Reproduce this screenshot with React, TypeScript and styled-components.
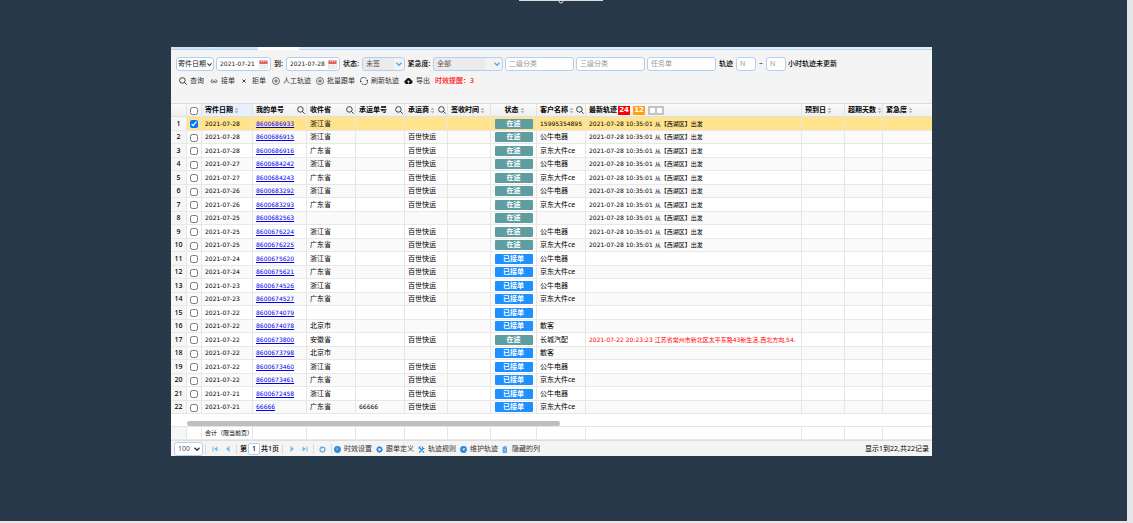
import React from "react";
import styled, { createGlobalStyle, css } from "styled-components";

const GlobalStyle = createGlobalStyle`
  * { box-sizing: border-box; }
  body {
    margin: 0;
    background: #e6e6e6;
    color: #000;
    font: 7px/12px "Noto Sans", "Noto Sans CJK SC", sans-serif;
  }
  button, input, select { font: inherit; color: inherit; }
  svg { display: block; flex: none; }
`;

const compactText = css`
  font-family: "DejaVu Sans", "Noto Sans CJK SC", sans-serif;
  font-size: 6px;
`;

const Page = styled.div`
  min-height: 100vh;
  padding: 0 6px 2px 0;
  background: #e6e6e6;
`;

const Backdrop = styled.main`
  display: flex;
  flex-direction: column;
  min-height: calc(100vh - 2px);
  background: #283a4a;
`;

const Handle = styled.div`
  display: flex;
  justify-content: center;
  align-self: center;
  width: 84px;
  height: 3px;
  margin-right: 5px;
  border-top: 1px solid #dcdfda;
`;

const Panel = styled.section`
  margin: 44px 195px 65px 171px;
  background: #fff;
`;

const TabStrip = styled.div`
  display: flex;
  gap: 1px;
  height: 3px;
  background: #e3eefb;
  border-bottom: 1px solid #b9d5f5;
`;

const TabEdge = styled.span<{ $active?: boolean; $width: number }>`
  width: ${(p) => p.$width}px;
  height: ${(p) => (p.$active ? 3 : 2)}px;
  background: ${(p) => (p.$active ? "#fff" : "#d5e5f8")};
`;

const Toolbar = styled.div`
  display: flex;
  flex-direction: column;
  gap: 4px;
  height: 53px;
  padding: 7px 5px 0;
  background: #f4f4f4;
`;

const Filters = styled.form`
  display: flex;
  align-items: center;
  gap: 2px;
  height: 14px;
  color: #222;
`;

const FilterLabel = styled.label<{ $width: number }>`
  width: ${(p) => p.$width}px;
  text-align: center;
  white-space: nowrap;
  font-weight: 500;
  color: #000;
`;

const Field = styled.span<{ $width: number; $muted?: boolean; $tight?: boolean }>`
  display: flex;
  align-items: center;
  flex: none;
  width: ${(p) => p.$width}px;
  height: 14px;
  padding: ${(p) => (p.$tight ? "0 1px" : "0 2px 0 3px")};
  border: 1px solid #b5cff0;
  border-radius: 3px;
  background: ${(p) => (p.$muted ? "linear-gradient(90deg, #ebebeb 75%, #f3f3f3 75%)" : "#fff")};
`;

const bareControl = css`
  flex: 1;
  min-width: 0;
  width: 100%;
  height: 12px;
  padding: 0;
  border: 0;
  outline: 0;
  background: transparent;
  appearance: none;
  &::placeholder { color: #999; opacity: 1; }
`;

const TextInput = styled.input`${bareControl}`;
const DateInput = styled.input`
  ${bareControl}
  ${compactText}
`;
const Select = styled.select<{ $dim?: boolean }>`
  ${bareControl}
  ${(p) => p.$dim && "color: #555;"}
`;

const Actions = styled.div`
  display: flex;
  align-items: center;
  height: 12px;
  padding-left: 3px;
`;

const ActionButton = styled.button<{ $wide?: boolean }>`
  display: flex;
  align-items: center;
  gap: 3px;
  width: ${(p) => (p.$wide ? 44 : 31)}px;
  height: 12px;
  padding: 0;
  border: 0;
  background: none;
  color: #333;
  white-space: nowrap;
`;

const Alert = styled.strong`
  color: #ff1010;
  font-weight: 500;
  white-space: nowrap;
`;

const Grid = styled.table`
  width: 100%;
  table-layout: fixed;
  border-spacing: 0;
  white-space: nowrap;
`;

const HeadCell = styled.th<{ $sorted?: boolean }>`
  height: 14px;
  padding: 0 1px 0 3px;
  border-right: 1px solid #e2e2e2;
  border-top: 1px solid #dcdcdc;
  border-bottom: 1px solid #e0e0e0;
  background: ${(p) => (p.$sorted ? "#e8f0fd" : "linear-gradient(#fafafa, #efefef)")};
  font-weight: 700;
  text-align: left;
  overflow: hidden;
  &:last-child { border-right: 0; }
`;

const HeadContent = styled.div<{ $center?: boolean }>`
  display: flex;
  align-items: center;
  justify-content: ${(p) => (p.$center ? "center" : "flex-start")};
  gap: 1px;
  height: 12px;
`;

const SearchSlot = styled.span`
  margin-left: auto;
`;

const CountBadge = styled.span<{ $color: string }>`
  width: 12px;
  height: 9px;
  margin-right: 2px;
  background: ${(p) => p.$color};
  color: #fff;
  font: bold 7px/9px "DejaVu Sans", sans-serif;
  text-align: center;
`;

const EmptyBadge = styled.span`
  display: flex;
  gap: 2px;
  width: 16px;
  height: 9px;
  padding: 2px;
  background: #c4c4c4;
  &::before, &::after { content: ""; flex: 1; background: #fff; }
`;

const Cell = styled.td`
  padding: 0 1px 0 3px;
  border-right: 1px solid #e6e6e6;
  border-bottom: 1px solid #e8e8e8;
  line-height: 12px;
  overflow: hidden;
  &:last-child { border-right: 0; }
`;

const CompactCell = styled(Cell)`
  ${compactText}
`;

const NumberCell = styled(Cell)`
  background: #f6f6f6;
  padding: 0;
  text-align: center;
  font-weight: 500;
`;

const FlushCell = styled(Cell)`
  padding: 0;
`;

const CheckHead = styled(HeadCell)`
  padding: 0;
`;

const Row = styled.tr<{ $selected?: boolean }>`
  height: 14px;
  background: #fff;
  &:nth-child(even) { height: 13px; background: #fafafa; }
  ${(p) => p.$selected && "background: #ffe48d;"}
`;

const Check = styled.input`
  display: block;
  width: 8px;
  height: 8px;
  margin: 1px auto 0;
`;

const OrderLink = styled.a`
  color: #0000ee;
  text-decoration: underline;
`;

const StatusTag = styled.span<{ $transit: boolean }>`
  display: block;
  width: 38px;
  height: 10px;
  margin: 0 auto;
  border-radius: 1px;
  background: ${(p) => (p.$transit ? "#5f9ea0" : "#1e90ff")};
  color: #fff;
  font-weight: 700;
  line-height: 10px;
  text-align: center;
`;

const Late = styled.span`
  color: #ff0000;
`;

const ScrollCell = styled.td`
  height: 13px;
  padding: 7px 0 0 16px;
  border-bottom: 1px solid #e4e4e4;
`;

const ScrollThumb = styled.div`
  width: 50%;
  height: 5px;
  border-radius: 3px;
  background: #bfbfbf;
`;

const SummaryRow = styled.tr`
  height: 13px;
`;

const SummaryCell = styled(CompactCell)`
  padding-right: 0;
  overflow: visible;
`;

const Pager = styled.footer`
  display: flex;
  align-items: center;
  height: 16px;
  padding: 1px 3px 0;
  border-top: 1px solid #dedede;
  background: #f4f4f4;
  white-space: nowrap;
`;

const PagerDivider = styled.span`
  width: 1px;
  height: 10px;
  margin: 0 2px;
  background: #dcdcdc;
`;

const PagerButton = styled.button`
  display: flex;
  align-items: center;
  justify-content: center;
  width: 13px;
  height: 12px;
  padding: 0;
  border: 0;
  background: none;
`;

const PagerText = styled.label`
  display: flex;
  align-items: center;
  gap: 1px;
  padding: 0 1px;
  font-weight: 500;
`;

const PageInput = styled.input`
  width: 12px;
  height: 12px;
  padding: 0;
  border: 1px solid #b5cff0;
  border-radius: 2px;
  background: #fff;
  text-align: center;
`;

const ToolButton = styled.button`
  display: flex;
  align-items: center;
  gap: 3px;
  width: 42px;
  height: 12px;
  padding: 0;
  border: 0;
  background: none;
  color: #333;
`;

const PagerInfo = styled.span`
  margin-left: auto;
`;

const SearchIcon = () => (
  <svg width="8" height="8" viewBox="0 0 16 16" fill="none" stroke="#222" strokeWidth="1.7">
    <circle cx="6.8" cy="6.8" r="5.6" />
    <path d="M10.8 10.8 15.4 15.4" />
  </svg>
);

const SortIcon = () => (
  <svg width="5" height="7" viewBox="0 0 10 14" fill="#b8b8b8">
    <path d="M5 1 9 6H1zM5 13 1 8h8z" />
  </svg>
);

const Chevron = ({ color = "#333", size = 6 }: { color?: string; size?: number }) => (
  <svg width={size} height={size} viewBox="0 0 12 12" fill="none" stroke={color} strokeWidth="2.6">
    <path d="m1 3.500 5 5 5-5" />
  </svg>
);

const CalendarIcon = () => (
  <svg width="9" height="10" viewBox="0 0 18 20">
    <rect x="1" y="3" width="16" height="16" fill="#f6f6f6" stroke="#d4d4d4" />
    <path d="M1 3h16v7H1z" fill="#e0625b" />
    <path d="M5 0v6M9 0v6M13 0v6" stroke="#f9dedb" strokeWidth="1.4" />
    <path d="M4 13h10M4 16h10" stroke="#c4c4c4" strokeDasharray="2 1" />
  </svg>
);

const LinkIcon = () => (
  <svg width="8" height="8" viewBox="0 0 16 16" fill="none" stroke="#444" strokeWidth="1.7">
    <path d="M7 10.500C5 12.500 2 11 2 8.500S5 5 6.500 6.500M9 10.500c2 2 5 .5 5-2S11 5 9.500 6.500M5.500 9h5" />
  </svg>
);

const CrossIcon = () => (
  <svg width="8" height="8" viewBox="0 0 16 16" stroke="#333" strokeWidth="1.8">
    <path d="m3 5 6 6M9 5l-6 6" />
  </svg>
);

const PlusIcon = () => (
  <svg width="8" height="8" viewBox="0 0 16 16" fill="none" stroke="#444" strokeWidth="1.5">
    <circle cx="8" cy="8" r="7" />
    <path d="M8 4v8M4 8h8" />
  </svg>
);

const ReloadIcon = () => (
  <svg width="8" height="8" viewBox="0 0 16 16" fill="none" stroke="#333" strokeWidth="1.600">
    <path d="M1.500 10.500A6.700 6.700 0 0 1 13 3.500M14.500 5.500A6.700 6.700 0 0 1 3 12.500" />
    <path d="M0 9h3.500M12.500 7H16" strokeWidth="1.300" />
  </svg>
);

const CloudIcon = () => (
  <svg width="9" height="8" viewBox="0 0 18 16">
    <path d="M4.500 14a4.200 4.200 0 0 1-.8-8.200 5.500 5.500 0 0 1 10.600 0A4.200 4.200 0 0 1 13.500 14z" fill="#111" />
    <path d="M9 13V8M6.500 10.200 9 7.500l2.500 2.700" stroke="#fff" strokeWidth="1.600" fill="none" />
  </svg>
);

const FirstIcon = ({ flip }: { flip?: boolean }) => (
  <svg width="6" height="6" viewBox="0 0 12 12" fill="#74b9ea">
    {flip ? <path d="M1 1 8 6 1 11zM9 1h2v10H9z" /> : <path d="M11 1 4 6l7 5zM1 1h2v10H1z" />}
  </svg>
);

const StepIcon = ({ flip }: { flip?: boolean }) => (
  <svg width="6" height="6" viewBox="0 0 12 12" fill="#74b9ea">
    {flip ? <path d="m3 0 7 6-7 6z" /> : <path d="M9 0 2 6l7 6z" />}
  </svg>
);

const RefreshIcon = () => (
  <svg width="7" height="7" viewBox="0 0 14 14">
    <path d="M9.500 2.600a5 5 0 1 1-5 0" fill="none" stroke="#3e9bdc" strokeWidth="2.200" />
    <path d="M5 0 10 2.800 5 5.500z" fill="#3e9bdc" />
  </svg>
);

const BLUE = "#2b8ae0";
const ToolIcon = ({ kind }: { kind: string }) => (
  <svg width="7" height="7" viewBox="0 0 14 14">
    {kind === "clock" && (
      <>
        <circle cx="7" cy="7" r="6.800" fill={BLUE} />
        <path d="M7 3v4H4" fill="none" stroke="#a9d3f8" strokeWidth="1.300" />
      </>
    )}
    {kind === "gear" && (
      <>
        <circle cx="7" cy="7" r="4.200" fill="none" stroke={BLUE} strokeWidth="3.200" />
        <path d="M7 .5v2M7 11.500v2M.5 7h2M11.500 7h2M2.500 2.500l1 1M10.500 10.500l1 1M11.500 2.500l-1 1M3.500 10.500l-1 1" stroke={BLUE} strokeWidth="2" />
      </>
    )}
    {kind === "tools" && (
      <>
        <path d="m3 3 9 10M1 5l4-4M11 5 2 13" stroke={BLUE} strokeWidth="2.300" />
        <path d="M9 1v4h4" fill="none" stroke={BLUE} strokeWidth="2.200" />
      </>
    )}
    {kind === "compass" && (
      <>
        <circle cx="7" cy="7" r="6.800" fill={BLUE} />
        <path d="m4 6 6-2-2 6-1.500-2.500z" fill="#e3f1fd" />
      </>
    )}
    {kind === "trash" && (
      <>
        <path d="M1 2.500h9M4 1h3" stroke={BLUE} strokeWidth="1.600" />
        <path d="M2 4.500h7V13H2z" fill="#7db8ee" stroke={BLUE} strokeWidth="1.400" />
      </>
    )}
  </svg>
);

type Order = [date: string, no: string, province: string, carrier: string, transit: boolean, customer: string, track?: string, carrierNo?: string];

const DEPARTED = "2021-07-28 10:35:01 从【西湖区】出发";
const BEST = "百世快运";
const orders: Order[] = [
  ["2021-07-28", "8600686933", "浙江省", "", true, "15995354895", DEPARTED],
  ["2021-07-28", "8600686915", "浙江省", BEST, true, "公牛电器", DEPARTED],
  ["2021-07-28", "8600686916", "广东省", BEST, true, "京东大件ce", DEPARTED],
  ["2021-07-27", "8600684242", "浙江省", BEST, true, "公牛电器", DEPARTED],
  ["2021-07-27", "8600684243", "广东省", BEST, true, "京东大件ce", DEPARTED],
  ["2021-07-26", "8600683292", "浙江省", BEST, true, "公牛电器", DEPARTED],
  ["2021-07-26", "8600683293", "广东省", BEST, true, "京东大件ce", DEPARTED],
  ["2021-07-25", "8600682563", "", "", true, "", DEPARTED],
  ["2021-07-25", "8600676224", "浙江省", BEST, true, "公牛电器", DEPARTED],
  ["2021-07-25", "8600676225", "广东省", BEST, true, "京东大件ce", DEPARTED],
  ["2021-07-24", "8600675620", "浙江省", BEST, false, "公牛电器"],
  ["2021-07-24", "8600675621", "广东省", BEST, false, "京东大件ce"],
  ["2021-07-23", "8600674526", "浙江省", BEST, false, "公牛电器"],
  ["2021-07-23", "8600674527", "广东省", BEST, false, "京东大件ce"],
  ["2021-07-22", "8600674079", "", "", false, ""],
  ["2021-07-22", "8600674078", "北京市", "", false, "散客"],
  ["2021-07-22", "8600673800", "安徽省", BEST, true, "长城汽配", "2021-07-22 20:23:23 江苏省常州市新北区太平东路43新生活,西北方向,54."],
  ["2021-07-22", "8600673798", "北京市", "", false, "散客"],
  ["2021-07-22", "8600673460", "浙江省", BEST, false, "公牛电器"],
  ["2021-07-22", "8600673461", "广东省", BEST, false, "京东大件ce"],
  ["2021-07-21", "8600672458", "浙江省", BEST, false, "公牛电器"],
  ["2021-07-21", "66666", "广东省", BEST, false, "京东大件ce", "", "66666"],
];

const columns: { title: string; width?: number; sort?: boolean; search?: boolean }[] = [
  { title: "寄件日期", width: 51, sort: true },
  { title: "我的单号", width: 54, search: true },
  { title: "收件省", width: 49, search: true },
  { title: "承运单号", width: 49, search: true },
  { title: "承运商", width: 43, sort: true, search: true },
  { title: "签收时间", width: 43, sort: true },
  { title: "状态", width: 46, sort: true },
  { title: "客户名称", width: 49, sort: true, search: true },
  { title: "最新轨迹", width: 216 },
  { title: "预到日", width: 43, sort: true },
  { title: "超期天数", width: 38, sort: true },
  { title: "紧急度", sort: true },
];

const DateField = ({ id, value, width }: { id: string; value: string; width: number }) => (
  <Field $width={width}>
    <DateInput id={id} aria-label="寄件日期" defaultValue={value} />
    <CalendarIcon />
  </Field>
);

const tools = [
  ["clock", "时效设置"],
  ["gear", "跟单定义"],
  ["tools", "轨迹规则"],
  ["compass", "维护轨迹"],
  ["trash", "隐藏的列"],
];

export default function App() {
  return (
    <Page>
      <GlobalStyle />
      <Backdrop>
        <Handle>
          <svg width="6" height="3" viewBox="0 0 6 3">
            <circle cx="3" cy="0" r="2" fill="#283a4a" stroke="#dcdfda" />
          </svg>
        </Handle>
        <Panel>
          <TabStrip>
            <TabEdge $width={42} />
            <TabEdge $width={43} />
            <TabEdge $width={41} $active />
          </TabStrip>
          <Toolbar>
            <Filters>
              <Field $width={38} $tight>
                <Select aria-label="日期类型"><option>寄件日期</option></Select>
                <Chevron size={5} />
              </Field>
              <DateField id="from" value="2021-07-21" width={55} />
              <FilterLabel $width={11} htmlFor="to">到:</FilterLabel>
              <DateField id="to" value="2021-07-28" width={54} />
              <FilterLabel $width={18} htmlFor="status">状态:</FilterLabel>
              <Field $width={43} $muted>
                <Select id="status" $dim><option>未签</option></Select>
                <Chevron color="#4aa8f0" />
              </Field>
              <FilterLabel $width={24} htmlFor="urgency">紧急度:</FilterLabel>
              <Field $width={70} $muted>
                <Select id="urgency" $dim><option>全部</option></Select>
                <Chevron color="#4aa8f0" />
              </Field>
              <Field $width={69}><TextInput aria-label="二级分类" placeholder="二级分类" /></Field>
              <Field $width={69}><TextInput aria-label="三级分类" placeholder="三级分类" /></Field>
              <Field $width={69}><TextInput aria-label="任务单" placeholder="任务单" /></Field>
              <FilterLabel $width={16} htmlFor="hmin">轨迹</FilterLabel>
              <Field $width={20}><TextInput id="hmin" placeholder="N" /></Field>
              <FilterLabel $width={6} htmlFor="hmax">~</FilterLabel>
              <Field $width={20}><TextInput id="hmax" placeholder="N" /></Field>
              <FilterLabel $width={49} htmlFor="hmax">小时轨迹未更新</FilterLabel>
            </Filters>
            <Actions>
              <ActionButton><SearchIcon />查询</ActionButton>
              <ActionButton><LinkIcon />接单</ActionButton>
              <ActionButton><CrossIcon />拒单</ActionButton>
              <ActionButton $wide><PlusIcon />人工轨迹</ActionButton>
              <ActionButton $wide><PlusIcon />批量跟单</ActionButton>
              <ActionButton $wide><ReloadIcon />刷新轨迹</ActionButton>
              <ActionButton><CloudIcon />导出</ActionButton>
              <Alert>时效提醒：3</Alert>
            </Actions>
          </Toolbar>
          <Grid>
            <colgroup>
              <col width={16} />
              <col width={15} />
              {columns.map((c) => <col key={c.title} width={c.width} />)}
            </colgroup>
            <thead>
              <tr>
                <HeadCell />
                <CheckHead><Check type="checkbox" aria-label="全选" /></CheckHead>
                {columns.map((c) => (
                  <HeadCell key={c.title} $sorted={c.title === "寄件日期"}>
                    <HeadContent $center={c.title === "状态"}>
                      {c.title}
                      {c.sort && <SortIcon />}
                      {c.search && <SearchSlot><SearchIcon /></SearchSlot>}
                      {c.title === "最新轨迹" && (
                        <>
                          <CountBadge $color="#ff0000">24</CountBadge>
                          <CountBadge $color="#ffa012">12</CountBadge>
                          <EmptyBadge />
                        </>
                      )}
                    </HeadContent>
                  </HeadCell>
                ))}
              </tr>
            </thead>
            <tbody>
              {orders.map(([date, no, province, carrier, transit, customer, track, carrierNo], i) => (
                <Row key={no} $selected={i === 0}>
                  <NumberCell>{i + 1}</NumberCell>
                  <FlushCell><Check type="checkbox" aria-label={no} defaultChecked={i === 0} /></FlushCell>
                  <CompactCell>{date}</CompactCell>
                  <CompactCell><OrderLink href={"#" + no}>{no}</OrderLink></CompactCell>
                  <Cell>{province}</Cell>
                  <CompactCell>{carrierNo}</CompactCell>
                  <Cell>{carrier}</Cell>
                  <Cell />
                  <FlushCell><StatusTag $transit={transit}>{transit ? "在途" : "已接单"}</StatusTag></FlushCell>
                  {/^\d/.test(customer) ? <CompactCell>{customer}</CompactCell> : <Cell>{customer}</Cell>}
                  <CompactCell>{no === "8600673800" ? <Late>{track}</Late> : track}</CompactCell>
                  <Cell />
                  <Cell />
                  <Cell />
                </Row>
              ))}
            </tbody>
            <tfoot>
              <tr>
                <ScrollCell colSpan={14}><ScrollThumb /></ScrollCell>
              </tr>
              <SummaryRow>
                <NumberCell />
                <Cell />
                <SummaryCell>合计（限当前页）</SummaryCell>
                {columns.slice(1).map((c) => <Cell key={c.title} />)}
              </SummaryRow>
            </tfoot>
          </Grid>
          <Pager>
            <Field $width={29}>
              <Select aria-label="每页条数" $dim><option>100</option></Select>
              <Chevron size={6} />
            </Field>
            <PagerDivider />
            <PagerButton aria-label="首页"><FirstIcon /></PagerButton>
            <PagerButton aria-label="上一页"><StepIcon /></PagerButton>
            <PagerDivider />
            <PagerText>第<PageInput defaultValue="1" />共1页</PagerText>
            <PagerDivider />
            <PagerButton aria-label="下一页"><StepIcon flip /></PagerButton>
            <PagerButton aria-label="末页"><FirstIcon flip /></PagerButton>
            <PagerDivider />
            <PagerButton aria-label="刷新"><RefreshIcon /></PagerButton>
            <PagerDivider />
            {tools.map(([kind, label]) => (
              <ToolButton key={kind}><ToolIcon kind={kind} />{label}</ToolButton>
            ))}
            <PagerInfo>显示1到22,共22记录</PagerInfo>
          </Pager>
        </Panel>
      </Backdrop>
    </Page>
  );
}
